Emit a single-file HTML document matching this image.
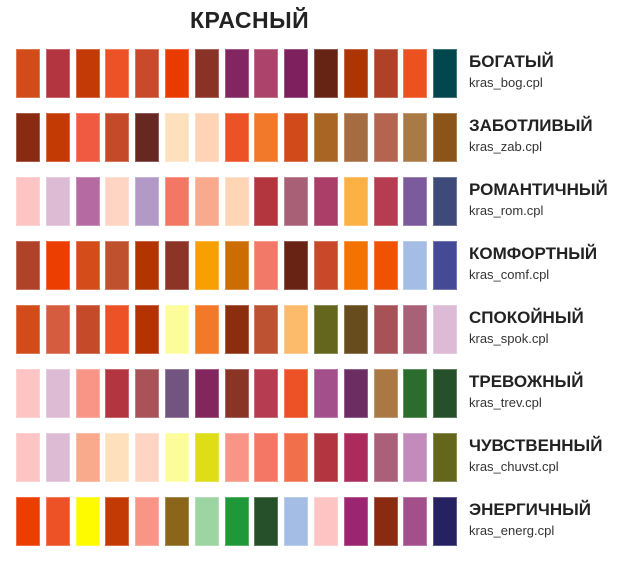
<!DOCTYPE html><html><head><meta charset="utf-8"><style>
body{margin:0;width:618px;height:563px;background:#fff;position:relative;overflow:hidden;font-family:"Liberation Sans",Arial,sans-serif;color:#222}
.t{position:absolute;left:190px;top:7px;font-size:23px;font-weight:bold;letter-spacing:0.5px}
.r{position:absolute;left:16px;height:49px}
.r i{position:absolute;top:0;width:24px;height:49px;box-shadow:inset 0 0 0 1px rgba(255,255,255,.25)}
.n{position:absolute;left:469px;font-size:17px;font-weight:bold}
.f{position:absolute;left:469px;font-size:13px;color:#333}
</style></head><body>
<div class="t">КРАСНЫЙ</div>
<div id="c"></div>
<script>
var rows=[
[49,"БОГАТЫЙ","kras_bog.cpl",["#d24c1a","#b3353f","#c33a06","#ec5226","#c94a2a","#e93b00","#8a3226","#822560","#ab436a","#7e205e","#662414","#ad3503","#b04129","#ec5220","#02474d"]],
[113,"ЗАБОТЛИВЫЙ","kras_zab.cpl",["#8a2b11","#c43a05","#ef5a40","#c44a2a","#672822","#fee0bd","#fed3b6","#ec5226","#f17929","#d14a19","#a86524","#a66c41","#b5654f","#a97a46","#8b5419"]],
[177,"РОМАНТИЧНЫЙ","kras_rom.cpl",["#fec3c3","#ddbbd5","#b56ba2","#fed5c3","#b39ac6","#f47765","#f9a98c","#fed5b5","#b3363f","#a76075","#aa3e68","#fbb144","#b63d51","#7c5b9c","#3e4a7a"]],
[241,"КОМФОРТНЫЙ","kras_comf.cpl",["#b0422a","#ec3e00","#d34c19","#bf512e","#b23500","#8c3426","#f8a001","#cb6d00","#f27867","#682314","#c84829","#f37200","#ef5200","#a3bde5","#444a93"]],
[305,"СПОКОЙНЫЙ","kras_spok.cpl",["#d24c1a","#d65c40","#c44a2a","#ec5226","#b43301","#fcfc9a","#f17929","#8c2d10","#bc5231","#fbbb6b","#63661c","#674d1e","#a85257","#a96178","#ddbad5"]],
[369,"ТРЕВОЖНЫЙ","kras_trev.cpl",["#fec3c3","#ddbbd5","#f89587","#b3353f","#a95258","#725480","#83265d","#8a3426","#b63d51","#ec5226","#a34f8c","#6b2d62","#ab7843","#2b6c2f","#265029"]],
[433,"ЧУВСТВЕННЫЙ","kras_chuvst.cpl",["#fec3c3","#ddbbd5","#f9a98c","#fee0bd","#fed5c3","#fcfc9a","#dedd16","#f89587","#f47765","#f26f4b","#b3353f","#ad2b5c","#ab6079","#c28bbb","#64661c"]],
[497,"ЭНЕРГИЧНЫЙ","kras_energ.cpl",["#ec3e00","#ec5226","#fefa00","#c43a05","#f89587","#8b6519","#9cd5a1","#1f9839","#265029","#a3bde5","#fec3c3","#9b2570","#8a2b11","#a34f8c","#262262"]]];
var h="";
rows.forEach(function(r){
h+='<div class="r" style="top:'+r[0]+'px">';
r[3].forEach(function(c,i){h+='<i style="left:'+Math.round(i*29.8)+'px;background:'+c+'"></i>';});
h+='</div><div class="n" style="top:'+(r[0]+3)+'px">'+r[1]+'</div><div class="f" style="top:'+(r[0]+26)+'px">'+r[2]+'</div>';
});
document.getElementById("c").innerHTML=h;
</script>
</body></html>
